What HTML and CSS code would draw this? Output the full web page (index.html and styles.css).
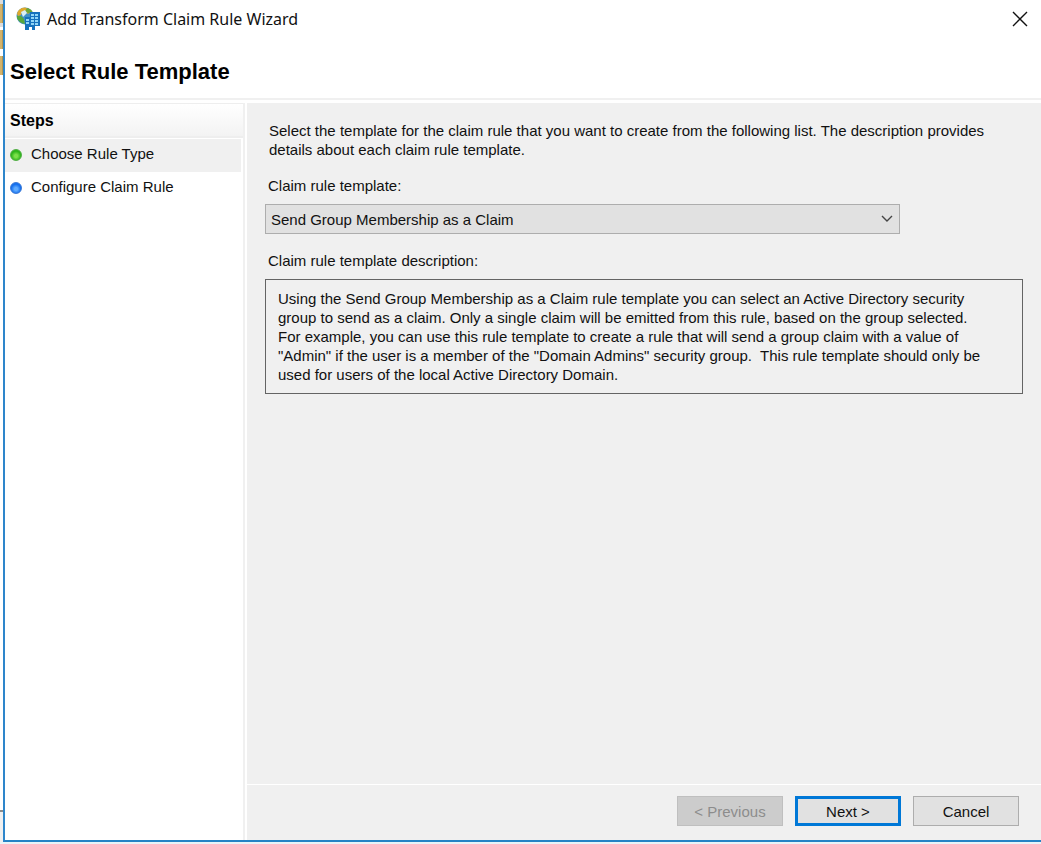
FILE: index.html
```html
<!DOCTYPE html>
<html lang="en">
<head>
<meta charset="utf-8">
<meta name="viewport" content="width=device-width, initial-scale=1">
<title>Add Transform Claim Rule Wizard</title>
<link rel="stylesheet" href="styles.css">
</head>
<body>
<div class="desktop">
  <div class="backdrop" aria-hidden="true">
    <span class="folder folder-selected"></span>
    <span class="folder"></span>
    <span class="folder"></span>
    <span class="backdrop-status"></span>
  </div>
  <div class="window">
    <header class="titlebar">
      <svg class="app-icon" viewBox="0 0 24 24" aria-hidden="true">
        <circle cx="9" cy="9" r="8.5" fill="#3f8fc4"/>
        <path d="M1 7Q2 1 9 .5Q13 1 15 4L12 7L9 4L6 5L5 8L2 9Z" fill="#e0a92c"/>
        <path d="M11 1Q16 2 17 6L12 6L9 4Z" fill="#6ba63a"/>
        <path d="M1 9L5 9L8 12L9 17Q3 16 1 11Z" fill="#58a83c"/>
        <path d="M5 5L9 3L11 6L7 10Z" fill="#d9eff5"/>
        <path d="M14 5H24V19H19V23H16V20H13V23H9V10H14Z" fill="#1672bd"/>
        <path d="M15 7h3v2h-3zM19 7h3v2h-3zM15 10h3v2h-3zM19 10h3v2h-3zM10 12h3v2h-3zM15 13h3v2h-3zM19 13h3v2h-3zM10 15h3v2h-3zM15 16h3v2h-3zM19 16h3v2h-3z" fill="#8fd5f6"/>
      </svg>
      <span class="window-title">Add Transform Claim Rule Wizard</span>
      <button class="close" type="button" aria-label="Close">
        <svg viewBox="0 0 16 16" aria-hidden="true"><path d="M1 1L15 15M15 1L1 15" fill="none" stroke="#111" stroke-width="1.4"/></svg>
      </button>
    </header>
    <h1 class="page-title">Select Rule Template</h1>
    <div class="wizard">
      <nav class="sidebar" aria-labelledby="steps-title">
        <h2 class="steps-title" id="steps-title">Steps</h2>
        <ol class="steps">
          <li class="step step-current" aria-current="step"><span class="dot dot-green"></span>Choose Rule Type</li>
          <li class="step"><span class="dot dot-blue"></span>Configure Claim Rule</li>
        </ol>
      </nav>
      <main class="content">
        <form class="form">
          <p class="intro">Select the template for the claim rule that you want to create from the following list. The description provides
details about each claim rule template.</p>
          <label class="label" for="template">Claim rule template:</label>
          <div class="select-box">
            <select class="select" id="template">
              <option>Send Group Membership as a Claim</option>
            </select>
            <svg class="chevron" viewBox="0 0 12 8" aria-hidden="true"><path d="M1 1L6 6L11 1" fill="none" stroke="#444" stroke-width="1.4"/></svg>
          </div>
          <h3 class="label" id="description-title">Claim rule template description:</h3>
          <p class="description" aria-labelledby="description-title">Using the Send Group Membership as a Claim rule template you can select an Active Directory security
group to send as a claim. Only a single claim will be emitted from this rule, based on the group selected.
For example, you can use this rule template to create a rule that will send a group claim with a value of
"Admin" if the user is a member of the "Domain Admins" security group.&nbsp; This rule template should only be
used for users of the local Active Directory Domain.</p>
        </form>
        <footer class="actions">
          <button class="button" type="button" disabled>&lt; Previous</button>
          <button class="button button-default" type="button">Next &gt;</button>
          <button class="button" type="button">Cancel</button>
        </footer>
      </main>
    </div>
  </div>
</div>
</body>
</html>
```
FILE: styles.css
```css
* {
  box-sizing: border-box;
}

body {
  margin: 0;
  background: #e8f4f8;
  color: #111;
  font: 15px/19px "Liberation Sans", Arial, sans-serif;
}

h1, h2, h3, p, ol {
  margin: 0;
  padding: 0;
}

button, select {
  font: inherit;
  color: inherit;
  border-radius: 0;
}

.desktop {
  display: flex;
  min-height: 100vh;
  padding-bottom: 2px;
}

.backdrop {
  display: flex;
  flex: none;
  flex-direction: column;
  gap: 7px;
  width: 3px;
  padding-top: 4px;
  background: #fff;
}

.folder {
  height: 19px;
  background: #d3b36b;
  border-right: 1px solid #b69650;
}

.folder-selected {
  box-shadow: 0 0 0 4px #dcdcdc;
}

.backdrop-status {
  height: 32px;
  margin-top: auto;
  background: #f0f0f0;
  border-top: 2px solid #8c8c8c;
}

.window {
  display: flex;
  flex: 1;
  flex-direction: column;
  min-width: 0;
  background: #fff;
  border-left: 2px solid #2e86cb;
  border-bottom: 2px solid #2583c5;
}

.titlebar {
  display: flex;
  align-items: center;
  height: 38px;
  padding-left: 11px;
}

.app-icon {
  width: 24px;
  height: 24px;
  margin-right: 7px;
}

.window-title {
  font: 16px/24px "Noto Sans", "Open Sans", sans-serif;
}

.close {
  width: 42px;
  height: 36px;
  margin-left: auto;
  padding: 0;
  background: none;
  border: 0;
}

.close svg {
  display: block;
  width: 16px;
  height: 16px;
  margin: auto;
}

.page-title {
  padding: 22px 5px 14px;
  border-bottom: 2px solid #f0f0f0;
  font-size: 22px;
  line-height: 24px;
  color: #000;
}

.wizard {
  display: flex;
  flex: 1;
  gap: 2px;
  padding-top: 3px;
}

.sidebar {
  flex: none;
  width: 240px;
  border-right: 2px solid #f0f0f0;
}

.steps-title {
  padding: 7px 5px 6px;
  border-top: 1px solid #eee;
  border-bottom: 2px solid #eee;
  background: linear-gradient(#fff, #f3f3f3);
  font-size: 16px;
  line-height: 19px;
  color: #000;
}

.steps {
  margin: 1px 2px 0 0;
  list-style: none;
}

.step {
  display: flex;
  align-items: center;
  gap: 9px;
  height: 33px;
  padding: 0 5px 4px;
}

.step-current {
  background: #f0f0f0;
}

.dot {
  width: 12px;
  height: 12px;
  margin-top: 3px;
  border-radius: 50%;
}

.dot-green {
  background: radial-gradient(circle at 50% 60%, #7be04a 20%, #2fb51b 60%);
  border: 1px solid #4fae42;
}

.dot-blue {
  background: radial-gradient(circle at 50% 60%, #5fabff 20%, #1570ee 60%);
  border: 1px solid #3978d6;
}

.content {
  display: flex;
  flex: 1;
  flex-direction: column;
  min-width: 0;
  background: #f0f0f0;
}

.form {
  flex: 1;
  padding: 18px;
}

.intro {
  padding-left: 4px;
  white-space: pre-line;
}

.label {
  display: block;
  padding: 17px 3px 9px;
  font-size: 15px;
  font-weight: normal;
}

.select-box {
  display: grid;
  align-items: center;
  max-width: 635px;
}

.select {
  grid-area: 1 / 1;
  width: 100%;
  height: 30px;
  padding: 0 36px 0 5px;
  appearance: none;
  background: #e1e1e1;
  border: 1px solid #adadad;
}

.chevron {
  grid-area: 1 / 1;
  justify-self: end;
  width: 12px;
  height: 8px;
  margin-right: 7px;
  pointer-events: none;
}

.description {
  padding: 9px 12px;
  border: 1px solid #646464;
  white-space: pre-line;
}

.actions {
  display: flex;
  justify-content: flex-end;
  gap: 12px;
  padding: 11px 22px 14px;
  border-top: 1px solid #fff;
}

.button {
  width: 106px;
  height: 30px;
  padding: 0;
  background: #e1e1e1;
  border: 1px solid #adadad;
}

.button:disabled {
  background: #ccc;
  border-color: #bfbfbf;
  color: #8c8c8c;
}

.button-default {
  border: 3px solid #0078d7;
}
```
